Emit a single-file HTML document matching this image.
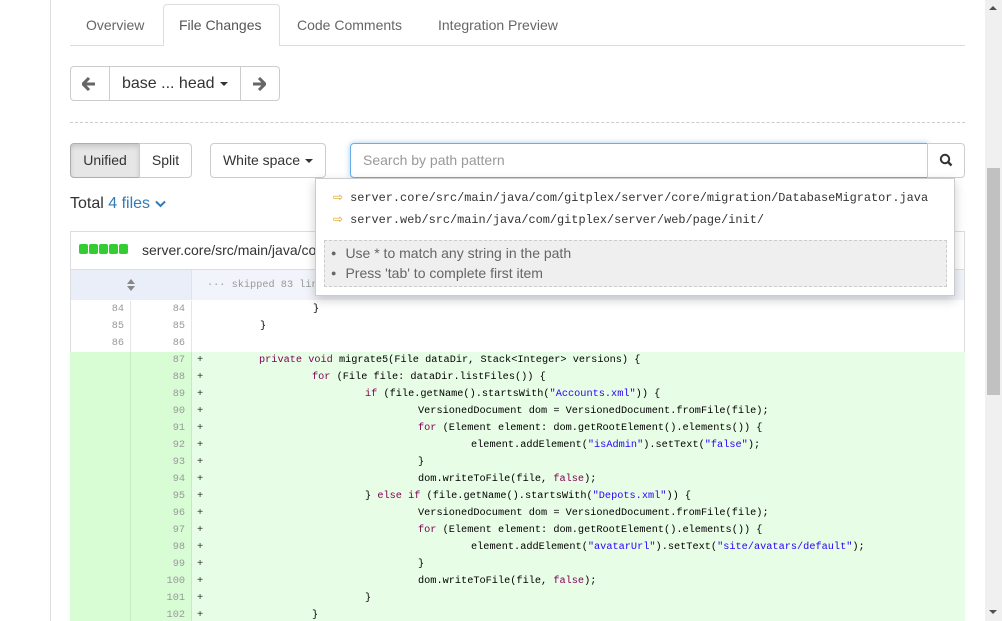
<!DOCTYPE html>
<html><head><meta charset="utf-8"><style>
*{box-sizing:border-box;margin:0;padding:0}
html,body{width:1002px;height:621px;overflow:hidden}
body{background:#fff;font-family:"Liberation Sans",sans-serif;font-size:14px;color:#333;position:relative}
.a{position:absolute}
.btn{position:absolute;border:1px solid #ccc;border-radius:4px;background:#fff;height:35px;line-height:33px;text-align:center;font-size:14px;color:#333}
.caret{display:inline-block;width:0;height:0;border-left:4px solid transparent;border-right:4px solid transparent;border-top:4px solid #333;vertical-align:middle;margin-left:3px}
.code{position:absolute;left:70px;width:895px;font-family:"Liberation Mono",monospace;font-size:10.25px}
.row{position:absolute;left:0;width:895px;height:17px;line-height:17px}
.n1,.n2{position:absolute;width:61px;text-align:right;padding-right:6px;color:#999;height:17px}
.n1{left:0;border-right:1px solid #e5e5e5}.n2{left:61px;border-right:1px solid #e5e5e5}
.add .n1,.add .n2{background:#d8fcd4;border-right-color:#c4eac0}
.add{background:#e7fde5}
.pl{position:absolute;left:127px;color:#333}
.t{position:absolute;white-space:pre;color:#000}
.k{color:#7f0055}.s{color:#2a00ff}
</style></head><body>
<div class="a" style="left:50px;top:0;width:1px;height:621px;background:#ddd"></div>
<div class="a" style="left:70px;top:45px;width:895px;height:1px;background:#ddd"></div>
<div class="a" style="left:86px;top:17px;color:#666;font-size:14px">Overview</div>
<div class="a" style="left:163px;top:4px;width:117px;height:42px;border:1px solid #ddd;border-bottom:none;border-radius:4px 4px 0 0;background:#fff"></div>
<div class="a" style="left:179px;top:17px;color:#555">File Changes</div>
<div class="a" style="left:297px;top:17px;color:#666">Code Comments</div>
<div class="a" style="left:438px;top:17px;color:#666">Integration Preview</div>
<div class="btn" style="left:70px;top:66px;width:210px"></div>
<div class="a" style="left:109px;top:66px;width:1px;height:35px;background:#ccc"></div>
<div class="a" style="left:240px;top:66px;width:1px;height:35px;background:#ccc"></div>
<svg class="a" style="left:82px;top:77px" width="14" height="14" viewBox="0 0 14 14"><path d="M7 1L1 7l6 6M1.5 7H13" stroke="#666" stroke-width="3" fill="none"/></svg>
<svg class="a" style="left:252px;top:77px" width="14" height="14" viewBox="0 0 14 14"><path d="M7 1l6 6-6 6M12.5 7H1" stroke="#666" stroke-width="3" fill="none"/></svg>
<div class="a" style="left:122px;top:75px;font-size:16px">base ... head<span class="caret" style="margin-left:5px"></span></div>
<div class="a" style="left:70px;top:122px;width:895px;border-top:1px dashed #ccc"></div>
<div class="btn" style="left:70px;top:143px;width:70px;background:#e6e6e6;border-color:#adadad;border-radius:4px 0 0 4px;box-shadow:inset 0 3px 5px rgba(0,0,0,.125)">Unified</div>
<div class="btn" style="left:139px;top:143px;width:53px;border-radius:0 4px 4px 0">Split</div>
<div class="btn" style="left:210px;top:143px;width:116px">White space<span class="caret" style="margin-left:5px"></span></div>
<div class="a" style="left:350px;top:143px;width:578px;height:35px;border:1px solid #66afe9;border-radius:4px 0 0 4px;box-shadow:0 0 6px rgba(102,175,233,.6);color:#999;padding:8px 12px">Search by path pattern</div>
<div class="btn" style="left:927px;top:143px;width:38px;border-radius:0 4px 4px 0"></div>
<svg class="a" style="left:939px;top:153px" width="14" height="14" viewBox="0 0 14 14"><circle cx="6" cy="6" r="4.2" stroke="#333" stroke-width="2" fill="none"/><path d="M9 9l3.5 3.5" stroke="#333" stroke-width="2.4"/></svg>
<div class="a" style="left:70px;top:195px;font-size:16px">Total <span style="color:#337ab7">4 files</span> <svg width="11" height="8" viewBox="0 0 11 8"><path d="M1 1.5l4.5 4.5 4.5-4.5" stroke="#337ab7" stroke-width="2" fill="none"/></svg></div>
<div class="a" style="left:70px;top:231px;width:895px;height:400px;border:1px solid #ddd"></div>
<div class="a" style="left:70px;top:269px;width:895px;height:1px;background:#ddd"></div>
<div class="a" style="left:79px;top:244px;display:flex;gap:1px">
<span style="width:9px;height:10px;background:#3c3;border-radius:2px"></span><span style="width:9px;height:10px;background:#3c3;border-radius:2px"></span><span style="width:9px;height:10px;background:#3c3;border-radius:2px"></span><span style="width:9px;height:10px;background:#3c3;border-radius:2px"></span><span style="width:9px;height:10px;background:#3c3;border-radius:2px"></span></div>
<div class="a" style="left:142px;top:242px;font-size:14px">server.core/src/main/java/com/gitplex/server/core/migration/DatabaseMigrator.java</div>
<div class="a" style="left:71px;top:270px;width:893px;height:30px;background:#f1f4fa"></div>
<div class="a" style="left:71px;top:270px;width:121px;height:30px;background:#e9eef8;border-right:1px solid #dde3ee"></div>
<svg class="a" style="left:127px;top:279px" width="8" height="12" viewBox="0 0 8 12"><path d="M0 5L4 0l4 5zM0 7l4 5 4-5z" fill="#888"/></svg>
<div class="a" style="left:207px;top:279px;font-family:'Liberation Mono',monospace;font-size:10.25px;color:#999">··· skipped 83 lines</div>
<div class="code" style="top:301px;height:330px">
<div class="row" style="top:0"><div class="n1">84</div><div class="n2">84</div><div class="t" style="left:243px">}</div></div>
<div class="row" style="top:17px"><div class="n1">85</div><div class="n2">85</div><div class="t" style="left:190px">}</div></div>
<div class="row" style="top:34px"><div class="n1">86</div><div class="n2">86</div></div>
<div class="row add" style="top:51px"><div class="n1"></div><div class="n2">87</div><span class="pl">+</span><div class="t" style="left:189px"><span class="k">private</span> <span class="k">void</span> migrate5(File dataDir, Stack&lt;Integer&gt; versions) {</div></div>
<div class="row add" style="top:68px"><div class="n1"></div><div class="n2">88</div><span class="pl">+</span><div class="t" style="left:242px"><span class="k">for</span> (File file: dataDir.listFiles()) {</div></div>
<div class="row add" style="top:85px"><div class="n1"></div><div class="n2">89</div><span class="pl">+</span><div class="t" style="left:295px"><span class="k">if</span> (file.getName().startsWith(<span class="s">"Accounts.xml"</span>)) {</div></div>
<div class="row add" style="top:102px"><div class="n1"></div><div class="n2">90</div><span class="pl">+</span><div class="t" style="left:348px">VersionedDocument dom = VersionedDocument.fromFile(file);</div></div>
<div class="row add" style="top:119px"><div class="n1"></div><div class="n2">91</div><span class="pl">+</span><div class="t" style="left:348px"><span class="k">for</span> (Element element: dom.getRootElement().elements()) {</div></div>
<div class="row add" style="top:136px"><div class="n1"></div><div class="n2">92</div><span class="pl">+</span><div class="t" style="left:401px">element.addElement(<span class="s">"isAdmin"</span>).setText(<span class="s">"false"</span>);</div></div>
<div class="row add" style="top:153px"><div class="n1"></div><div class="n2">93</div><span class="pl">+</span><div class="t" style="left:348px">}</div></div>
<div class="row add" style="top:170px"><div class="n1"></div><div class="n2">94</div><span class="pl">+</span><div class="t" style="left:348px">dom.writeToFile(file, <span class="k">false</span>);</div></div>
<div class="row add" style="top:187px"><div class="n1"></div><div class="n2">95</div><span class="pl">+</span><div class="t" style="left:295px">} <span class="k">else</span> <span class="k">if</span> (file.getName().startsWith(<span class="s">"Depots.xml"</span>)) {</div></div>
<div class="row add" style="top:204px"><div class="n1"></div><div class="n2">96</div><span class="pl">+</span><div class="t" style="left:348px">VersionedDocument dom = VersionedDocument.fromFile(file);</div></div>
<div class="row add" style="top:221px"><div class="n1"></div><div class="n2">97</div><span class="pl">+</span><div class="t" style="left:348px"><span class="k">for</span> (Element element: dom.getRootElement().elements()) {</div></div>
<div class="row add" style="top:238px"><div class="n1"></div><div class="n2">98</div><span class="pl">+</span><div class="t" style="left:401px">element.addElement(<span class="s">"avatarUrl"</span>).setText(<span class="s">"site/avatars/default"</span>);</div></div>
<div class="row add" style="top:255px"><div class="n1"></div><div class="n2">99</div><span class="pl">+</span><div class="t" style="left:348px">}</div></div>
<div class="row add" style="top:272px"><div class="n1"></div><div class="n2">100</div><span class="pl">+</span><div class="t" style="left:348px">dom.writeToFile(file, <span class="k">false</span>);</div></div>
<div class="row add" style="top:289px"><div class="n1"></div><div class="n2">101</div><span class="pl">+</span><div class="t" style="left:295px">}</div></div>
<div class="row add" style="top:306px"><div class="n1"></div><div class="n2">102</div><span class="pl">+</span><div class="t" style="left:242px">}</div></div>
</div>
<div class="a" style="left:315px;top:178px;width:640px;height:118px;background:#fff;border:1px solid #ccc;box-shadow:0 4px 10px rgba(0,0,0,.2)">
<div class="a" style="left:17px;top:11px;font-family:'Liberation Mono',monospace;font-size:11.9px;color:#333;white-space:pre"><span style="color:#e0a020">&#x21E8;</span> server.core/src/main/java/com/gitplex/server/core/migration/DatabaseMigrator.java</div>
<div class="a" style="left:17px;top:33px;font-family:'Liberation Mono',monospace;font-size:11.9px;color:#333;white-space:pre"><span style="color:#e0a020">&#x21E8;</span> server.web/src/main/java/com/gitplex/server/web/page/init/</div>
<div class="a" style="left:8px;top:61px;width:623px;height:47px;background:#efefef;border:1px dashed #ccc;color:#666;font-size:14px;padding:2px 0 0 6px;line-height:20px">
<div><span style="font-size:9px;margin-right:9px;vertical-align:2px">●</span>Use * to match any string in the path</div>
<div><span style="font-size:9px;margin-right:9px;vertical-align:2px">●</span>Press 'tab' to complete first item</div></div>
</div>
<div class="a" style="left:985px;top:0;width:17px;height:621px;background:#f0f0f0"></div>
<div class="a" style="left:987px;top:168px;width:13px;height:227px;background:#c1c1c1"></div>
<div class="a" style="left:989px;top:6px;width:0;height:0;border-left:4px solid transparent;border-right:4px solid transparent;border-bottom:4px solid #505050"></div>
<div class="a" style="left:989px;top:610px;width:0;height:0;border-left:4px solid transparent;border-right:4px solid transparent;border-top:4px solid #505050"></div>
</body></html>
